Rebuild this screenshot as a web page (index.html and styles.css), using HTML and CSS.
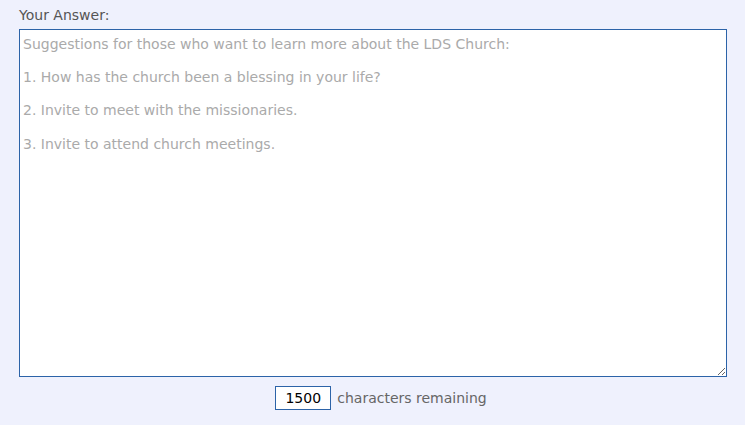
FILE: index.html
```html
<!DOCTYPE html>
<html>
<head>
<meta charset="utf-8">
<link rel="stylesheet" href="styles.css">
</head>
<body>
<div class="answer">
  <label class="label" for="ans">Your Answer:</label>
  <textarea id="ans" class="box" placeholder="Suggestions for those who want to learn more about the LDS Church:

1. How has the church been a blessing in your life?

2. Invite to meet with the missionaries.

3. Invite to attend church meetings."></textarea>
  <div class="counter">
    <input class="count" type="text" value="1500" readonly>
    <span class="remain">characters remaining</span>
  </div>
</div>
</body>
</html>
```
FILE: styles.css
```css
html, body {
  margin: 0;
  padding: 0;
  background: #eff1fd;
  font-family: "DejaVu Sans", Verdana, sans-serif;
}
.answer {
  padding: 7px 18px 0 19px;
  display: flex;
  flex-direction: column;
}
.label {
  font-size: 14px;
  color: #555;
  line-height: 17px;
  margin-bottom: 5px;
}
.box {
  box-sizing: border-box;
  width: 708px;
  height: 348px;
  margin: 0;
  border: 1px solid #2c63a8;
  background: #fff;
  padding: 6px 3px 3px 3px;
  font-family: "DejaVu Sans", Verdana, sans-serif;
  font-size: 14px;
  line-height: 16.6px;
  resize: both;
  outline: none;
}
.box::placeholder {
  color: #aaaaaa;
  opacity: 1;
}
.counter {
  display: flex;
  align-items: center;
  justify-content: center;
  gap: 6px;
  margin-top: 9px;
  padding-left: 16px;
}
.count {
  box-sizing: border-box;
  width: 56px;
  height: 24px;
  border: 1px solid #2c63a8;
  margin: 0;
  padding: 0 4px;
  text-align: center;
  font-family: "DejaVu Sans", Verdana, sans-serif;
  font-size: 14px;
  color: #000;
  background: #fff;
  outline: none;
}
.remain {
  font-size: 14px;
  color: #666;
}
```
